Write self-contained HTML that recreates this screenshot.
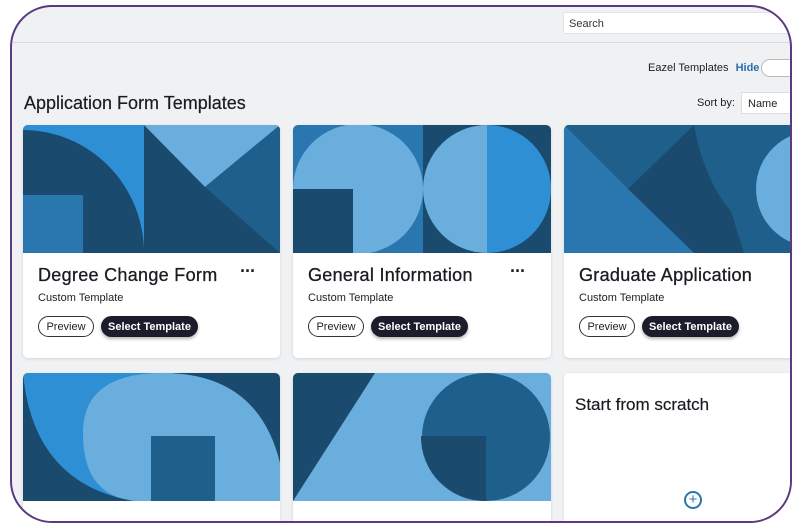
<!DOCTYPE html>
<html><head><style>
*{margin:0;padding:0;box-sizing:border-box}
body{width:800px;height:528px;background:#fff;overflow:hidden;font-family:"Liberation Sans",sans-serif;position:relative}
.frame{position:absolute;left:10px;top:5px;width:782px;height:518px;border:2px solid #5a3a80;border-radius:42px;overflow:hidden;background:#f0f1f3}
.abs{position:absolute}
.card{position:absolute;background:#fff;border-radius:5px;overflow:hidden;box-shadow:0 1px 3px rgba(0,0,0,.12)}
.card svg{display:block}
.t{position:absolute;left:15px;top:140px;font-size:18px;color:#1b1b22;letter-spacing:.3px;-webkit-text-stroke:.3px #1b1b22}
.s{position:absolute;left:15px;top:167px;font-size:11px;color:#222}
.dots{position:absolute;left:217px;top:136px;font-size:18px;font-weight:bold;color:#222;letter-spacing:-1px}
.pv,.sel{position:absolute;top:191px;height:21px;border-radius:11px;font-size:11px;display:flex;align-items:center;justify-content:center}
.pv{left:15px;width:56px;border:1px solid #333;color:#222}
.sel{left:78px;width:97px;background:#1b1d2b;color:#fff;font-weight:bold;box-shadow:0 2px 3px rgba(0,0,0,.3)}
</style></head><body>
<div class="frame">
 <div class="abs" style="left:0;top:35px;width:800px;height:1px;background:#d8d9dc"></div>
 <div class="abs" style="left:551px;top:5px;width:240px;height:22px;background:#fff;border:1px solid #e3e3e3;border-radius:3px;font-size:11px;color:#333;padding:5px 0 0 5px">Search</div>
 <div class="abs" style="left:636px;top:55px;font-size:11px;color:#222">Eazel Templates <span style="color:#2a6fb0;font-weight:bold;margin-left:4px">Hide</span></div>
 <div class="abs" style="left:749px;top:52px;width:40px;height:18px;border:1px solid #bbb;border-radius:9px;background:#fff"></div>
 <div class="abs" style="left:12px;top:86px;font-size:18px;color:#1b1b22;-webkit-text-stroke:.2px #1b1b22">Application Form Templates</div>
 <div class="abs" style="left:685px;top:90px;font-size:11px;color:#222">Sort by:</div>
 <div class="abs" style="left:729px;top:85px;width:60px;height:22px;background:#fff;border:1px solid #ddd;font-size:11px;padding:5px 0 0 6px;color:#222">Name</div>

 <div class="card" style="left:11px;top:118px;width:257px;height:233px">
  <svg width="257" height="128"><rect width="257" height="128" fill="#1a4a6e"/><rect width="121" height="128" fill="#2f8fd4"/><path d="M0 5 A121 123 0 0 1 121 128 L0 128Z" fill="#1a4a6e"/><rect x="0" y="70" width="60" height="58" fill="#2a77b0"/><polygon points="121,0 257,0 182,62" fill="#6aaedd"/><polygon points="257,0 182,62 257,128" fill="#1e5f8c"/></svg>
  <div class="t">Degree Change Form</div><div class="dots">···</div><div class="s">Custom Template</div><div class="pv">Preview</div><div class="sel">Select Template</div>
 </div>
 <div class="card" style="left:281px;top:118px;width:258px;height:233px">
  <svg width="258" height="128"><rect width="130" height="128" fill="#2a77b0"/><rect x="130" width="128" height="128" fill="#1a4a6e"/><circle cx="65" cy="64" r="65" fill="#6aaedd"/><rect x="0" y="64" width="60" height="64" fill="#1a4a6e"/><path d="M194 0 A64 64 0 0 0 194 128Z" fill="#6aaedd"/><path d="M194 0 A64 64 0 0 1 194 128Z" fill="#2f8fd4"/></svg>
  <div class="t">General Information</div><div class="dots">···</div><div class="s">Custom Template</div><div class="pv">Preview</div><div class="sel">Select Template</div>
 </div>
 <div class="card" style="left:552px;top:118px;width:240px;height:233px">
  <svg width="240" height="128"><rect width="240" height="128" fill="#2a77b0"/><polygon points="0,0 140,0 240,128 140,128" fill="#1e5f8c"/><polygon points="0,0 130,0 64,64" fill="#1e5f8c"/><polygon points="64,64 130,0 140,0 180,128 130,128" fill="#1a4a6e"/><path d="M130 0 Q150 110 240 128 L240 0Z" fill="#1e5f8c"/><circle cx="250" cy="64" r="58" fill="#6aaedd"/></svg>
  <div class="t">Graduate Application</div><div class="s">Custom Template</div><div class="pv">Preview</div><div class="sel">Select Template</div>
 </div>

 <div class="card" style="left:11px;top:366px;width:257px;height:160px">
  <svg width="257" height="128"><rect width="257" height="128" fill="#1a4a6e"/><path d="M0 0 L150 0 L150 128 L110 128 Q10 110 0 0Z" fill="#2f8fd4"/><path d="M140 0 Q60 0 60 60 Q60 128 120 128 L257 128 L257 90 Q235 0 140 0Z" fill="#6aaedd"/><rect x="128" y="63" width="64" height="65" fill="#1e5f8c"/></svg>
 </div>
 <div class="card" style="left:281px;top:366px;width:258px;height:160px">
  <svg width="258" height="128"><rect width="258" height="128" fill="#6aaedd"/><polygon points="0,0 82,0 0,128" fill="#1a4a6e"/><ellipse cx="193" cy="64" rx="64" ry="64" fill="#1e5f8c"/><path d="M128 63 L193 63 L193 128 A64 64 0 0 1 128 63Z" fill="#1a4a6e"/></svg>
 </div>
 <div class="card" style="left:552px;top:366px;width:240px;height:160px">
  <div class="abs" style="left:11px;top:22px;font-size:17px;color:#1b1b22;-webkit-text-stroke:.2px #1b1b22">Start from scratch</div>
  <div class="abs" style="left:120px;top:118px;width:18px;height:18px;border:2px solid #2a77b0;border-radius:50%;color:#2a77b0;font-size:15px;line-height:13px;text-align:center">+</div>
 </div>
</div>
</body></html>
